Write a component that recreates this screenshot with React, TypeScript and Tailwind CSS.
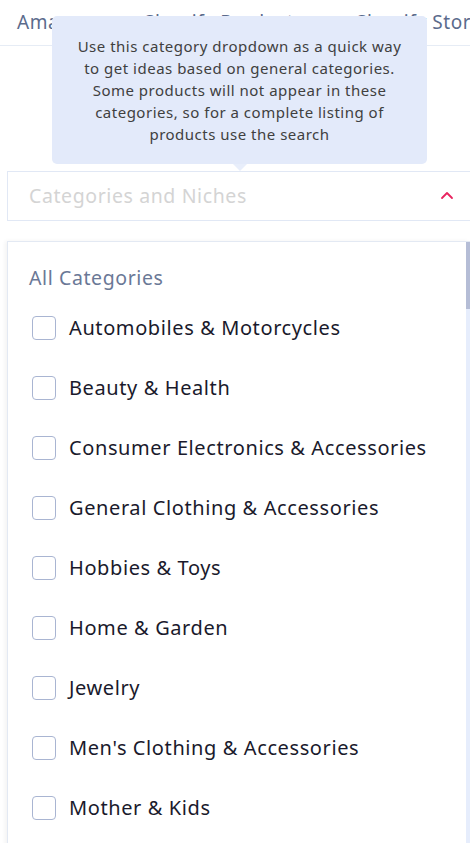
import React from "react";

const items = [
  "Automobiles & Motorcycles",
  "Beauty & Health",
  "Consumer Electronics & Accessories",
  "General Clothing & Accessories",
  "Hobbies & Toys",
  "Home & Garden",
  "Jewelry",
  "Men's Clothing & Accessories",
  "Mother & Kids",
];

export default function App() {
  return (
    <div
      className="relative w-[470px] h-[843px] overflow-hidden bg-white"
      style={{ fontFamily: '"Noto Sans", "Open Sans", sans-serif' }}
    >
      {/* Tabs */}
      <div className="flex h-[46px] items-center border-b border-[#e6ecf5] whitespace-nowrap text-[19px] tracking-[0.6px] text-[#5b6b8c]">
        <div className="ml-[17px] w-[127px] shrink-0">Amazon</div>
        <div className="w-[212px] shrink-0">Shopify Products</div>
        <div className="shrink-0">Shopify Stores</div>
      </div>

      {/* Select */}
      <div className="mt-[125px] ml-[7px] flex h-[50px] w-[480px] items-center border border-[#e1e8f5] pl-[21px]">
        <span className="text-[19.5px] tracking-[0.6px] text-[#d4d4d4]">Categories and Niches</span>
        <svg
          className="absolute left-[440px] top-[190px]"
          width="14"
          height="10"
          viewBox="0 0 14 10"
          fill="none"
        >
          <polyline
            points="2,8 7,3 12,8"
            stroke="#e8245f"
            strokeWidth="1.8"
            strokeLinecap="round"
            strokeLinejoin="round"
          />
        </svg>
      </div>

      {/* Dropdown panel */}
      <div className="mt-[20px] ml-[7px] flex h-[700px] w-[463px] border-l border-t border-[#e3e9f3] shadow-[-2px_0_4px_rgba(0,0,0,0.05)]">
        <div className="flex-1 pl-[21px]">
          <div className="mt-[22px] h-[27px] text-[19.5px] leading-[27px] tracking-[0.6px] text-[#6a7896]">
            All Categories
          </div>
          <div className="mt-[7px]">
            {items.map((it) => (
              <div key={it} className="flex h-[60px] items-center">
                <div className="ml-[3px] h-[24px] w-[24px] shrink-0 rounded-[4px] border border-[#a9b5d2] bg-white" />
                <span className="ml-[13px] text-[20px] tracking-[0.6px] text-[#1a1a2c] whitespace-nowrap">
                  {it}
                </span>
              </div>
            ))}
          </div>
        </div>
        <div className="flex w-[4px] flex-col bg-[#e6edfc]">
          <div className="h-[67px] w-full bg-[#b5bdd6]" />
        </div>
      </div>

      {/* Tooltip */}
      <div className="absolute left-[52px] top-[16px] w-[375px] h-[148px] rounded-[5px] bg-[#e3eafa] pt-[19px] text-center text-[15px] leading-[22px] tracking-[0.5px] text-[#404040] whitespace-nowrap">
        Use this category dropdown as a quick way
        <br />
        to get ideas based on general categories.
        <br />
        Some products will not appear in these
        <br />
        categories, so for a complete listing of
        <br />
        products use the search
        <div className="absolute left-[181px] top-[148px] h-0 w-0 border-x-[7px] border-t-[7px] border-x-transparent border-t-[#e8eefb]" />
      </div>
    </div>
  );
}
